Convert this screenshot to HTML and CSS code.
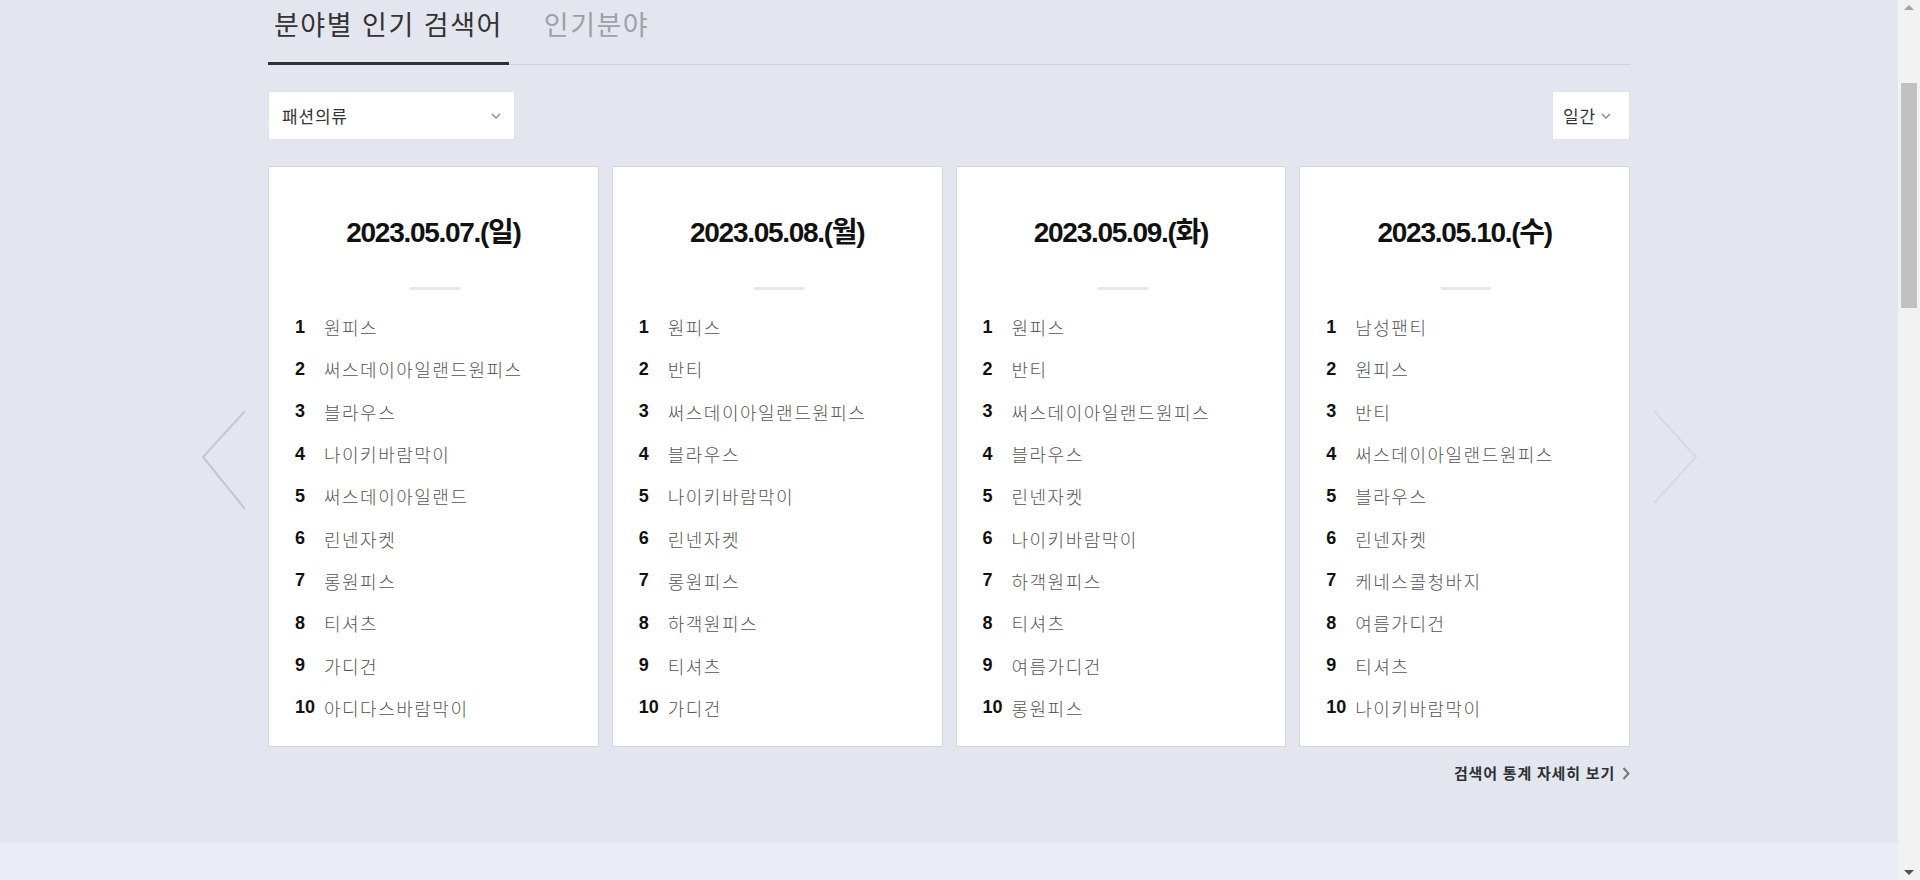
FILE: index.html
```html
<!DOCTYPE html>
<html lang="ko">
<head>
<meta charset="utf-8">
<title>분야별 인기 검색어</title>
<link rel="stylesheet" href="styles.css">
</head>
<body>
<div class="page">
  <section class="keyword-section">
    <div class="wrap">
      <div class="tabs">
        <a class="tab tab-active">분야별 인기 검색어</a>
        <a class="tab">인기분야</a>
      </div>
      <div class="filters">
        <div class="select select-category">
          <span>패션의류</span>
          <svg class="chev" width="10" height="6" viewBox="0 0 10 6"><polyline points="1,1 5,5 9,1" fill="none" stroke="#8a8a8a" stroke-width="1.4"/></svg>
        </div>
        <div class="select select-period">
          <span>일간</span>
          <svg class="chev" width="10" height="6" viewBox="0 0 10 6"><polyline points="1,1 5,5 9,1" fill="none" stroke="#8a8a8a" stroke-width="1.4"/></svg>
        </div>
      </div>
      <div class="slider">
        <button class="arrow arrow-prev" aria-label="이전">
          <svg width="45" height="100" viewBox="0 0 45 100"><polyline points="44,1 2,47 44,99" fill="none" stroke="#c4c9d1" stroke-width="2"/></svg>
        </button>
        <div class="cards">
          <div class="card">
            <h3 class="card-date">2023.05.07.(일)</h3>
            <div class="card-bar"></div>
            <ol class="rank-list">
              <li><span class="num">1</span><span class="kw">원피스</span></li>
              <li><span class="num">2</span><span class="kw">써스데이아일랜드원피스</span></li>
              <li><span class="num">3</span><span class="kw">블라우스</span></li>
              <li><span class="num">4</span><span class="kw">나이키바람막이</span></li>
              <li><span class="num">5</span><span class="kw">써스데이아일랜드</span></li>
              <li><span class="num">6</span><span class="kw">린넨자켓</span></li>
              <li><span class="num">7</span><span class="kw">롱원피스</span></li>
              <li><span class="num">8</span><span class="kw">티셔츠</span></li>
              <li><span class="num">9</span><span class="kw">가디건</span></li>
              <li><span class="num">10</span><span class="kw">아디다스바람막이</span></li>
            </ol>
          </div>
          <div class="card">
            <h3 class="card-date">2023.05.08.(월)</h3>
            <div class="card-bar"></div>
            <ol class="rank-list">
              <li><span class="num">1</span><span class="kw">원피스</span></li>
              <li><span class="num">2</span><span class="kw">반티</span></li>
              <li><span class="num">3</span><span class="kw">써스데이아일랜드원피스</span></li>
              <li><span class="num">4</span><span class="kw">블라우스</span></li>
              <li><span class="num">5</span><span class="kw">나이키바람막이</span></li>
              <li><span class="num">6</span><span class="kw">린넨자켓</span></li>
              <li><span class="num">7</span><span class="kw">롱원피스</span></li>
              <li><span class="num">8</span><span class="kw">하객원피스</span></li>
              <li><span class="num">9</span><span class="kw">티셔츠</span></li>
              <li><span class="num">10</span><span class="kw">가디건</span></li>
            </ol>
          </div>
          <div class="card">
            <h3 class="card-date">2023.05.09.(화)</h3>
            <div class="card-bar"></div>
            <ol class="rank-list">
              <li><span class="num">1</span><span class="kw">원피스</span></li>
              <li><span class="num">2</span><span class="kw">반티</span></li>
              <li><span class="num">3</span><span class="kw">써스데이아일랜드원피스</span></li>
              <li><span class="num">4</span><span class="kw">블라우스</span></li>
              <li><span class="num">5</span><span class="kw">린넨자켓</span></li>
              <li><span class="num">6</span><span class="kw">나이키바람막이</span></li>
              <li><span class="num">7</span><span class="kw">하객원피스</span></li>
              <li><span class="num">8</span><span class="kw">티셔츠</span></li>
              <li><span class="num">9</span><span class="kw">여름가디건</span></li>
              <li><span class="num">10</span><span class="kw">롱원피스</span></li>
            </ol>
          </div>
          <div class="card">
            <h3 class="card-date">2023.05.10.(수)</h3>
            <div class="card-bar"></div>
            <ol class="rank-list">
              <li><span class="num">1</span><span class="kw">남성팬티</span></li>
              <li><span class="num">2</span><span class="kw">원피스</span></li>
              <li><span class="num">3</span><span class="kw">반티</span></li>
              <li><span class="num">4</span><span class="kw">써스데이아일랜드원피스</span></li>
              <li><span class="num">5</span><span class="kw">블라우스</span></li>
              <li><span class="num">6</span><span class="kw">린넨자켓</span></li>
              <li><span class="num">7</span><span class="kw">케네스콜청바지</span></li>
              <li><span class="num">8</span><span class="kw">여름가디건</span></li>
              <li><span class="num">9</span><span class="kw">티셔츠</span></li>
              <li><span class="num">10</span><span class="kw">나이키바람막이</span></li>
            </ol>
          </div>
        </div>
        <button class="arrow arrow-next" aria-label="다음">
          <svg width="45" height="100" viewBox="0 0 45 100"><polyline points="1,1 43,47 1,93" fill="none" stroke="#d5d9e1" stroke-width="2"/></svg>
        </button>
      </div>
      <div class="more-row">
        <a class="more-link">검색어 통계 자세히 보기
          <svg width="8" height="13" viewBox="0 0 8 13"><polyline points="1.5,1 6.5,6.5 1.5,12" fill="none" stroke="#777" stroke-width="2"/></svg>
        </a>
      </div>
    </div>
  </section>
  <section class="next-section"></section>
</div>
<div class="scrollbar">
  <div class="sb-up"></div>
  <div class="sb-thumb"></div>
  <div class="sb-down"></div>
</div>
</body>
</html>
```
FILE: styles.css
```css
* { box-sizing: border-box; }
html, body { margin: 0; padding: 0; }
body {
  width: 1920px;
  height: 880px;
  overflow: hidden;
  background: #e3e6ef;
  font-family: "Noto Sans CJK KR", "Liberation Sans", sans-serif;
  color: #333;
}
.page {
  width: 1898px;
  height: 880px;
  display: flex;
  flex-direction: column;
}
.keyword-section {
  height: 843px;
  background: #e3e6ef;
}
.next-section {
  flex: 1;
  background: #eaedf6;
}
.wrap {
  width: 1362px;
  margin: 0 auto;
}

/* tabs */
.tabs {
  display: flex;
  align-items: flex-end;
  border-bottom: 1px solid #cfd3dc;
  height: 65px;
}
.tab {
  display: block;
  font-size: 27px;
  line-height: 48px;
  padding: 0 6px 14px 6px;
  margin-bottom: -1px;
  color: #a0a0a6;
  letter-spacing: 1.5px;
  border-bottom: 3px solid transparent;
  white-space: nowrap;
}
.tab-active {
  color: #333;
  border-bottom-color: #2f3136;
  margin-right: 29px;
}

/* filters */
.filters {
  display: flex;
  justify-content: space-between;
  margin-top: 26px;
}
.select {
  height: 49px;
  background: #fff;
  border: 1px solid #dfe3ea;
  display: flex;
  align-items: center;
  font-size: 17px;
  letter-spacing: 0.8px;
  color: #333;
}
.select-category {
  width: 247px;
  padding: 0 13px 0 13px;
  justify-content: space-between;
}
.select-period {
  width: 78px;
  padding: 0 12px 0 10px;
  gap: 5px;
}
.chev { display: block; }

/* slider */
.slider {
  position: relative;
  margin-top: 26px;
}
.cards {
  display: grid;
  grid-template-columns: repeat(4, 1fr);
  gap: 13px;
}
.card {
  height: 581px;
  background: #fff;
  border: 1px solid #d2d8e0;
  padding: 46px 0 15px 26px;
}
.card-date {
  margin: 0 0 0 -26px;
  text-align: center;
  font-family: "Liberation Sans", "Noto Sans CJK KR", sans-serif;
  font-weight: 700;
  font-size: 28px;
  line-height: 40px;
  letter-spacing: -1.3px;
  color: #111;
}
.card-bar {
  width: 50px;
  height: 3px;
  background: #e6e7ea;
  margin: 34px 0 0 115px;
}
.rank-list {
  list-style: none;
  margin: 16px 0 0;
  padding: 0;
}
.rank-list li {
  display: flex;
  align-items: center;
  height: 42.3px;
}
.num {
  width: 29px;
  flex: none;
  font-family: "Liberation Sans", sans-serif;
  font-weight: 700;
  font-size: 18px;
  color: #111;
}
.kw {
  font-size: 18px;
  font-weight: 300;
  letter-spacing: 1.5px;
  color: #555;
  white-space: nowrap;
}

.arrow {
  position: absolute;
  top: 244px;
  width: 45px;
  height: 100px;
  padding: 0;
  border: 0;
  background: none;
}
.arrow svg { display: block; }
.arrow-prev { left: -67px; }
.arrow-next { right: -68px; }

/* more link */
.more-row {
  display: flex;
  justify-content: flex-end;
  margin-top: 16px;
}
.more-link {
  display: flex;
  align-items: center;
  gap: 7px;
  font-size: 15px;
  line-height: 20px;
  font-weight: 700;
  letter-spacing: 0.8px;
  color: #2e3035;
}
.more-link svg { display: block; }

/* fake browser scrollbar */
.scrollbar {
  position: fixed;
  top: 0;
  right: 0;
  width: 22px;
  height: 880px;
  background: #f1f1f1;
}
.sb-thumb {
  position: absolute;
  left: 3px;
  top: 83px;
  width: 16px;
  height: 225px;
  background: #c1c1c1;
}
.sb-up, .sb-down {
  position: absolute;
  left: 6px;
  width: 0;
  height: 0;
  border-left: 5px solid transparent;
  border-right: 5px solid transparent;
}
.sb-up {
  top: 5px;
  border-bottom: 5px solid #a3a3a3;
}
.sb-down {
  bottom: 5px;
  border-top: 5px solid #505050;
}
```
